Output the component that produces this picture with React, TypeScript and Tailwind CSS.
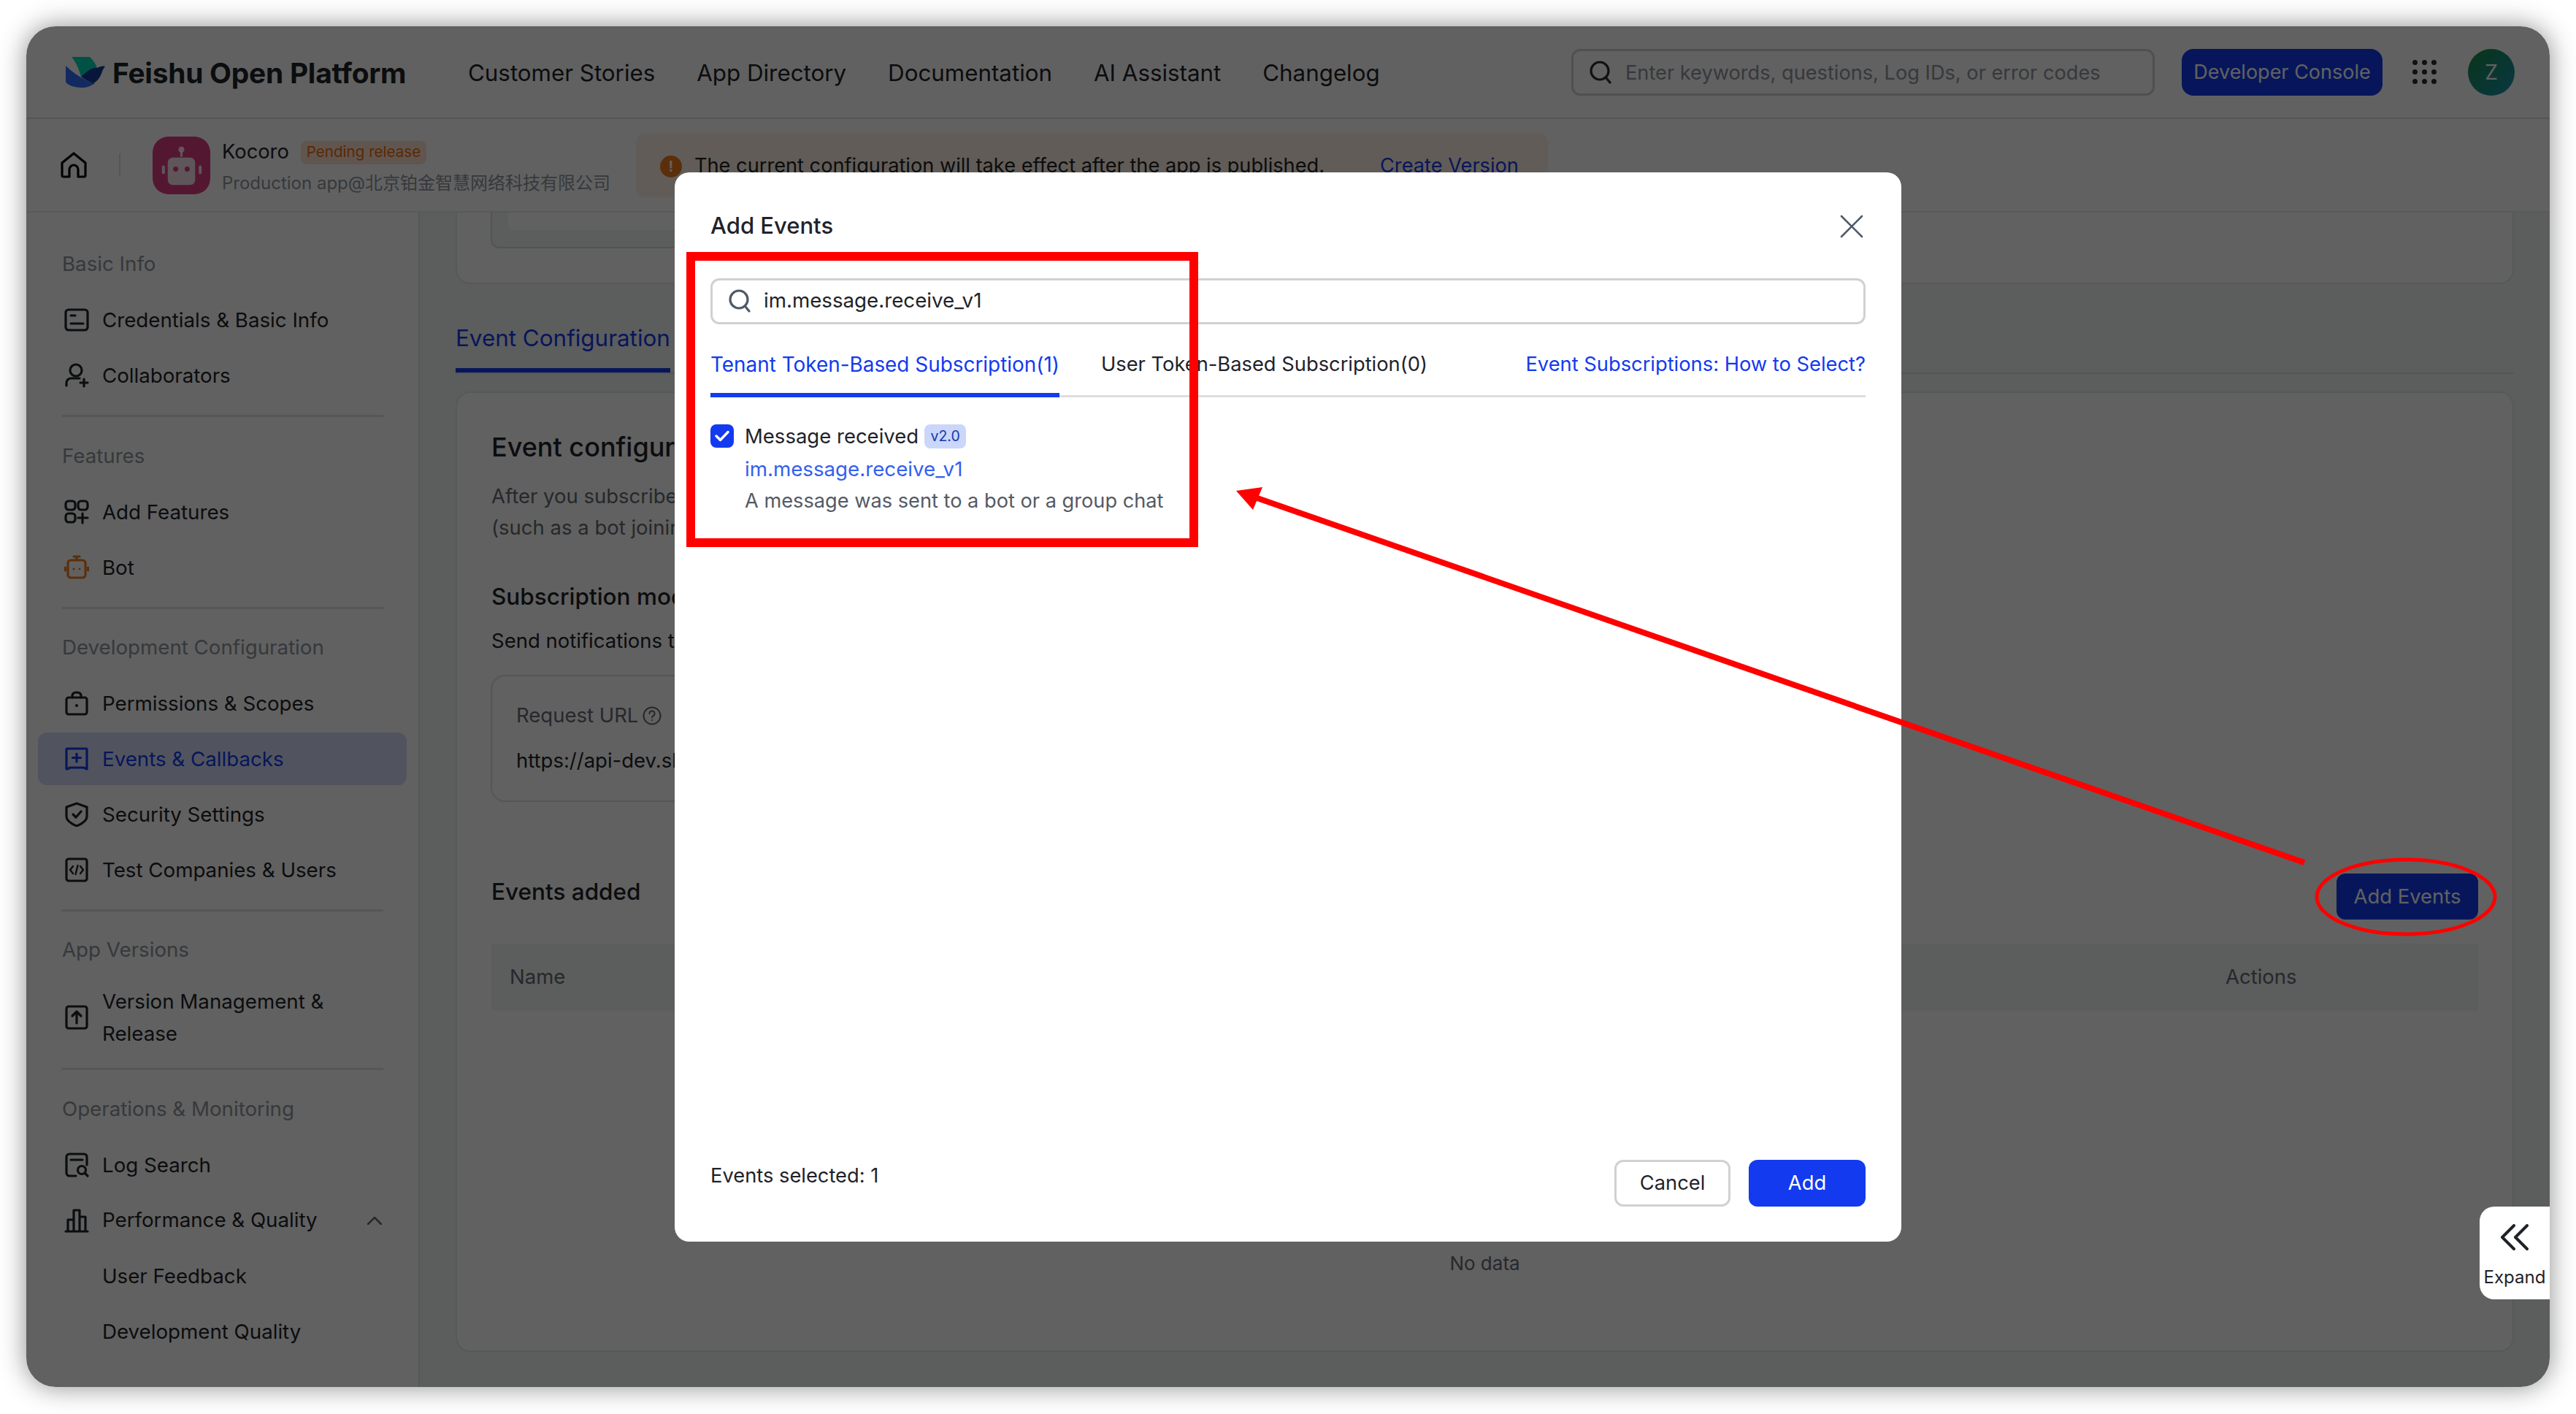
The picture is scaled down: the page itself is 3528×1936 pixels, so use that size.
import React from "react";

const S = ({ w = 34, h = 34, vb = "0 0 34 34", cls = "", sw = 3.2, children }: { w?: number; h?: number; vb?: string; cls?: string; sw?: number; children: React.ReactNode }) => (
  <svg width={w} height={h} viewBox={vb} fill="none" stroke="currentColor" strokeWidth={sw} strokeLinecap="round" strokeLinejoin="round" className={"shrink-0 " + cls}>
    {children}
  </svg>
);

const icons: Record<string, React.ReactNode> = {
  cred: (
    <S>
      <rect x="2" y="3" width="30" height="28" rx="4" />
      <path d="M9 11h6M9 22h17" />
    </S>
  ),
  collab: (
    <S>
      <circle cx="16" cy="10" r="8" />
      <path d="M3 31v-4a6 6 0 0 1 6-6h12M27 22v10M22 27h10" />
    </S>
  ),
  features: (
    <S>
      <rect x="2" y="2" width="13" height="12" rx="4" />
      <rect x="19" y="2" width="13" height="12" rx="4" />
      <rect x="2" y="19" width="13" height="12" rx="4" />
      <path d="M25 19v13M19 25h13" />
    </S>
  ),
  bot: (
    <S cls="text-[#f07c1e]">
      <rect x="5" y="7" width="24" height="24" rx="4" />
      <path d="M13 2h8M17 2v5M1.5 17v4M32.5 17v4" />
      <path d="M13 19h.01M21 19h.01" />
    </S>
  ),
  perm: (
    <S>
      <rect x="3" y="9" width="28" height="23" rx="3" />
      <path d="M11 9V6a6 4 0 0 1 12 0v3" />
      <path d="M17 20h.01" strokeWidth={4} />
    </S>
  ),
  events: (
    <S>
      <path d="M4 3h26a1 1 0 0 1 1 1v27l-4-2H8l-4 2a1 1 0 0 1-1-1V4a1 1 0 0 1 1-1Z" />
      <path d="M17 10v11M11.5 15.5h11" />
    </S>
  ),
  shield: (
    <S>
      <path d="M17 2 31 7v13c0 6-7 10-14 13C10 30 3 26 3 20V7l14-5Z" />
      <path d="m12 17 4 4 7-8" />
    </S>
  ),
  test: (
    <S>
      <rect x="3" y="2" width="28" height="30" rx="3" />
      <path d="m12 12-4 5 4 5M22 12l4 5-4 5M18.5 11l-3 12" strokeWidth={2.4} />
    </S>
  ),
  version: (
    <S>
      <rect x="3" y="2" width="28" height="30" rx="3" />
      <path d="M17 25V10M11 15l6-6 6 6" />
    </S>
  ),
  log: (
    <S>
      <path d="M16 32H7a4 4 0 0 1-4-4V6a4 4 0 0 1 4-4h20a4 4 0 0 1 4 4v11" />
      <path d="M9 10h16" />
      <circle cx="24" cy="24" r="5.5" />
      <path d="m28 28 4 4" />
    </S>
  ),
  perf: (
    <S>
      <path d="M2 32h30M5 32V16h8v16M13 32V3h8v29M21 32V12h8v20" />
    </S>
  ),
};

const Item = ({ icon, active, two, children }: { icon?: string; active?: boolean; two?: boolean; children: React.ReactNode }) => (
  <div className={"mb-1 flex items-center gap-[18px] rounded-xl pl-9 pr-6 text-[27.7px] leading-[44px] " + (two ? "h-[103px] " : "h-[72px] ") + (active ? "bg-[#d5dcf8] text-[#133aef]" : "text-[#1f2329]")}>
    {icon ? icons[icon] : <span className="w-[34px] shrink-0" />}
    <span>{children}</span>
  </div>
);

const Label = ({ children }: { children: React.ReactNode }) => (
  <div className="mb-1 flex h-[72px] items-center pl-[33px] text-[27.7px] text-[#8f959e]">{children}</div>
);

const Divider = ({ tight }: { tight?: boolean }) => <div className={"mx-8 mt-[18px] h-[3px] bg-[#dfe1e5] " + (tight ? "mb-[17px]" : "mb-[18px]")} />;

const Sidebar = () => (
  <aside className="w-[539px] shrink-0 border-r-2 border-[#e4e6ea] bg-white px-4 pt-[35px]">
    <Label>Basic Info</Label>
    <Item icon="cred">Credentials &amp; Basic Info</Item>
    <Item icon="collab">Collaborators</Item>
    <Divider />
    <Label>Features</Label>
    <Item icon="features">Add Features</Item>
    <Item icon="bot">Bot</Item>
    <Divider tight />
    <Label>Development Configuration</Label>
    <Item icon="perm">Permissions &amp; Scopes</Item>
    <Item icon="events" active>Events &amp; Callbacks</Item>
    <Item icon="shield">Security Settings</Item>
    <Item icon="test">Test Companies &amp; Users</Item>
    <Divider tight />
    <Label>App Versions</Label>
    <Item icon="version" two>
      Version Management &amp; Release
    </Item>
    <Divider />
    <Label>Operations &amp; Monitoring</Label>
    <Item icon="log">Log Search</Item>
    <div className="mb-1 flex h-[72px] items-center gap-[18px] pl-9 pr-[34px] text-[27.7px] text-[#1f2329]">
      {icons.perf}
      <span>Performance &amp; Quality</span>
      <svg width="20" height="12" viewBox="0 0 20 12" fill="none" stroke="#646a73" strokeWidth="2.5" strokeLinecap="round" strokeLinejoin="round" className="ml-auto">
        <path d="M1 11 10 2l9 9" />
      </svg>
    </div>
    <Item>User Feedback</Item>
    <Item>Development Quality</Item>
  </aside>
);

const Header = () => (
  <header className="flex h-[127px] shrink-0 items-center border-b-2 border-[#dee0e3] bg-white pl-[54px] pr-12">
    <svg width="54" height="42" viewBox="0 0 54 42" className="shrink-0">
      <path d="M8 0h25c4 4 8 9 10 15L21 27C18 16 14 7 8 0Z" fill="#00d6b9" />
      <path d="M0 12c8 8 18 15 30 21l10 3c-6 4-11 6-18 6C10 42 2 38 0 34V12Z" fill="#3370ff" />
      <path d="M21 27c6-5 13-13 22-12 4-2 7-3 11-2-2 2-3 4-4 7-3 9-8 14-12 16-6-2-12-5-17-9Z" fill="#133c9a" />
    </svg>
    <span className="ml-[10px] mt-1 w-[399px] whitespace-nowrap text-[38.8px] font-bold leading-none tracking-[-0.2px] text-[#1f2329]">Feishu Open Platform</span>
    <nav className="ml-[88px] mt-1 flex items-center gap-[57px] text-[31.3px] text-[#1f2329]">
      <span>Customer Stories</span>
      <span>App Directory</span>
      <span>Documentation</span>
      <span>AI Assistant</span>
      <span>Changelog</span>
    </nav>
    <div className="ml-auto flex h-[64px] w-[799px] items-center gap-[19px] rounded-xl border-[3px] border-[#d0d3d6] pl-[22px] text-[27.2px] text-[#8f959e]">
      <S w={30} h={34} vb="0 0 30 34" cls="text-[#2b2f36]">
        <circle cx="14" cy="15" r="12" />
        <path d="m23 25 5 6" />
      </S>
      <span className="pt-[3px]">Enter keywords, questions, Log IDs, or error codes</span>
    </div>
    <button className="ml-[37px] h-[64px] w-[275px] rounded-2xl bg-[#133aef] pt-[2px] text-[27px] text-white">Developer Console</button>
    <div className="ml-[41px] grid grid-cols-3 gap-[6px]">
      {Array.from({ length: 9 }).map((_, i) => (
        <span key={i} className="size-[7px] rounded-full bg-[#2b2f36]" />
      ))}
    </div>
    <div className="ml-[43px] flex size-[64px] items-center justify-center rounded-full bg-gradient-to-br from-[#1e8a3c] to-[#1f90b0] text-[28px] text-white">Z</div>
  </header>
);

const SubHeader = () => (
  <div className="flex h-[128px] shrink-0 items-center border-b-2 border-[#e8e9ec] bg-white pl-[47px]">
    <S w={36} h={36} vb="0 0 36 36">
      <path d="M2 15 18 2l16 13v17a2 2 0 0 1-2 2h-8V24a5 5 0 0 0-12 0v10H4a2 2 0 0 1-2-2V15Z" />
    </S>
    <div className="mx-[44px] h-[32px] w-[2px] bg-[#dee0e3]" />
    <svg width="79" height="79" viewBox="0 0 80 80" className="shrink-0">
      <rect width="80" height="80" rx="22" fill="#de3d85" />
      <rect x="21" y="29" width="38" height="38" rx="7" fill="#ffffff" fillOpacity="0.85" />
      <circle cx="32" cy="45" r="3.5" fill="#de3d85" />
      <circle cx="48" cy="45" r="3.5" fill="#de3d85" />
      <rect x="13" y="40" width="4" height="12" rx="2" fill="#fff" fillOpacity="0.85" />
      <rect x="64" y="40" width="4" height="12" rx="2" fill="#fff" fillOpacity="0.85" />
      <path d="M40 28V20" stroke="#fff" strokeOpacity="0.85" strokeWidth="3" />
      <circle cx="40" cy="18" r="4" fill="#fff" fillOpacity="0.85" />
    </svg>
    <div className="ml-[16px] mt-[3px] flex flex-col">
      <div className="flex h-[44px] items-center gap-[16px]">
        <span className="text-[27.3px] text-[#1f2329]">Kocoro</span>
        <span className="flex h-[32px] items-center rounded-lg bg-[#fde3cf] px-[8px] text-[20.6px] text-[#f0690a]">Pending release</span>
      </div>
      <span className="mt-[2px] whitespace-nowrap text-[24px] leading-[36px] text-[#8f959e]">Production app@北京铂金智慧网络科技有限公司</span>
    </div>
    <div className="ml-[35px] flex h-[87px] w-[1249px] items-center rounded-xl bg-[#fff2e4] pl-[33px] pt-[3px] text-[27.2px] text-[#1f2329]">
      <span className="flex size-[30px] items-center justify-center rounded-full bg-[#ee7b1f] text-[20px] font-bold text-white">!</span>
      <span className="ml-[17px]">The current configuration will take effect after the app is published.</span>
      <span className="ml-[76px] text-[#133aef]">Create Version</span>
    </div>
  </div>
);

const Main = () => (
  <main className="flex min-w-0 flex-1 flex-col bg-[#f2f3f5] pb-12 pl-[49px] pr-[49px]">
    <div className="h-[98px] shrink-0 rounded-b-[20px] border-2 border-t-0 border-[#e4e6ea] bg-white pl-[46px]">
      <div className="h-[49px] w-[1000px] rounded-b-xl border-2 border-t-0 border-[#d6dcdc] bg-[#eff6f4] pb-[23px] pl-[22px]">
        <div className="h-full rounded-bl-lg bg-white" />
      </div>
    </div>
    <div className="mt-[52px] shrink-0 border-b-2 border-[#dee0e3]">
      <span className="inline-block border-b-[6px] border-[#133aef] pb-[19px] text-[31.4px] leading-[44px] text-[#133aef]">Event Configuration</span>
    </div>
    <section className="mt-6 flex flex-1 flex-col rounded-[20px] border-2 border-[#e4e6ea] bg-white px-[47px] pt-[50px]">
      <h2 className="text-[36px] font-medium leading-[48px] text-[#1f2329]">Event configuration</h2>
      <p className="mt-[22px] text-[27.5px] leading-[43px] text-[#646a73]">
        After you subscribe to events, the platform will notify your app when they occur
        <br />
        (such as a bot joining a group)
      </p>
      <h3 className="mt-[51px] text-[31.5px] font-medium leading-[44px] text-[#1f2329]">Subscription mode</h3>
      <p className="mt-[18px] text-[27.5px] leading-10 text-[#1f2329]">Send notifications to developer's server</p>
      <div className="-ml-px mt-[27px] h-[174px] w-[1200px] rounded-[20px] border-2 border-[#dee0e3] pl-[33px] pt-[32px] text-[27.5px]">
        <div className="flex h-11 items-center gap-[6px] text-[#646a73]">
          Request URL
          <S w={26} h={26} vb="0 0 26 26" sw={2}>
            <circle cx="13" cy="13" r="11.5" />
            <path d="M9.5 10a3.5 3.5 0 1 1 5 3.2c-1 .6-1.5 1.2-1.5 2.3M13 19h.01" />
          </S>
        </div>
        <div className="mt-[17px] leading-11 text-[#1f2329]">https://api-dev.shenyu.com/webhook</div>
      </div>
      <div className="mt-[98px] flex h-[63px] shrink-0 items-start justify-between">
        <span className="text-[31.5px] font-medium leading-[50px] text-[#1f2329]">Events added</span>
        <button className="h-[63px] w-[194px] rounded-xl bg-[#133aef] text-[27.4px] text-white">Add Events</button>
      </div>
      <div className="mt-[33px] flex h-[92px] shrink-0 items-center justify-between bg-[#f2f3f5] pl-[25px] text-[27.5px] text-[#646a73]">
        <span>Name</span>
        <span className="w-[346px]">Actions</span>
      </div>
      <div className="pt-[324px] text-center text-[26px] leading-11 text-[#646a73]">No data</div>
    </section>
  </main>
);

const Modal = () => (
  <div className="flex h-[1464px] w-[1680px] flex-col rounded-[20px] bg-white px-[49px] pb-12 pt-[52px]">
    <div className="flex h-11 items-center justify-between text-[31px] font-medium text-[#1f2329]">
      <span>Add Events</span>
      <svg width="32" height="32" viewBox="0 0 32 32" fill="none" stroke="#4e5969" strokeWidth="2.6" strokeLinecap="round" className="mr-[3px]">
        <path d="m2 2 28 28M30 2 2 30" />
      </svg>
    </div>
    <div className="mt-[49px] flex h-[63px] shrink-0 items-center gap-[18px] rounded-xl border-[3px] border-[#cfd1d4] pl-[22px] text-[27.7px] text-[#1f2329]">
      <S w={30} h={34} vb="0 0 30 34" cls="text-[#4e5969]">
        <circle cx="14" cy="15" r="12" />
        <path d="m23 25 5 6" />
      </S>
      <span>im.message.receive_v1</span>
    </div>
    <div className="mt-[33px] flex h-[67px] shrink-0 items-start border-b-[3px] border-[#dcdee1] text-[27.3px] leading-11">
      <span className="h-[67px] border-b-[6px] border-[#133aef] text-[27.9px] text-[#133aef]">Tenant Token-Based Subscription(1)</span>
      <span className="ml-[57px] text-[#1f2329]">User Token-Based Subscription(0)</span>
      <span className="ml-auto text-[#133aef]">Event Subscriptions: How to Select?</span>
    </div>
    <div className="mt-[37px] flex gap-[15px]">
      <div className="flex size-[32px] shrink-0 items-center justify-center rounded-lg bg-[#133aef]">
        <svg width="20" height="16" viewBox="0 0 20 16" fill="none" stroke="#fff" strokeWidth="3.4" strokeLinecap="round" strokeLinejoin="round">
          <path d="m2 8 5.5 5.5L18 2.5" />
        </svg>
      </div>
      <div className="flex flex-col text-[27.2px] leading-[44px]">
        <div className="flex h-[33px] items-center gap-[8px] text-[27.5px] text-[#1f2329]">
          Message received
          <span className="flex h-[33px] w-[57px] items-center justify-center rounded-lg bg-[#cbd6fb] text-[19.5px] text-[#133aa8]">v2.0</span>
        </div>
        <span className="mt-[6px] text-[27.7px] text-[#3360ef]">im.message.receive_v1</span>
        <span className="text-[#545a65]">A message was sent to a bot or a group chat</span>
      </div>
    </div>
    <div className="mt-auto flex items-start justify-between text-[27.3px]">
      <span className="leading-11 text-[#1f2329]">Events selected: 1</span>
      <div className="flex gap-[25px]">
        <button className="h-[64px] w-[159px] rounded-xl border-[3px] border-[#cfd1d4] bg-white pt-[2px] text-[#1f2329]">Cancel</button>
        <button className="h-[64px] w-[160px] rounded-xl bg-[#133aef] pt-[2px] text-white">Add</button>
      </div>
    </div>
  </div>
);

export default function App() {
  return (
    <div className="relative h-[1936px] w-[3528px] overflow-hidden bg-white px-9 pb-[37px] pt-9 font-['Inter','Noto_Sans_CJK_SC',sans-serif]">
      <div className="relative flex h-full flex-col overflow-hidden rounded-[40px] bg-white shadow-[0_0_36px_rgba(0,0,0,0.45)]">
        <Header />
        <SubHeader />
        <div className="flex min-h-0 flex-1">
          <Sidebar />
          <Main />
        </div>
        <div className="absolute inset-0 flex items-center justify-center bg-black/[0.62]">
          <Modal />
        </div>
        <div className="absolute right-0 top-[1616px] flex h-[127px] w-[96px] flex-col items-center rounded-l-[20px] bg-white pt-[24px] text-[24px] text-[#1f2329]">
          <svg width="40" height="36" viewBox="0 0 40 36" fill="none" stroke="#1f2329" strokeWidth="4" strokeLinecap="round" strokeLinejoin="round">
            <path d="M19 2 3 18l16 16M37 2 21 18l16 16" />
          </svg>
          <span className="mt-[23px] leading-7">Expand</span>
        </div>
      </div>
      <svg width="3528" height="1936" viewBox="0 0 3528 1936" className="pointer-events-none absolute left-0 top-0" fill="none">
        <rect x="946" y="351" width="689" height="392" stroke="#ff0000" strokeWidth="12" />
        <path d="M3156 1181 1722 682" stroke="#ff0000" strokeWidth="8" />
        <polygon points="1693,672 1729,667 1716,698" fill="#ff0000" />
        <ellipse cx="3295" cy="1228" rx="122" ry="51" stroke="#ff0000" strokeWidth="5" />
      </svg>
    </div>
  );
}
